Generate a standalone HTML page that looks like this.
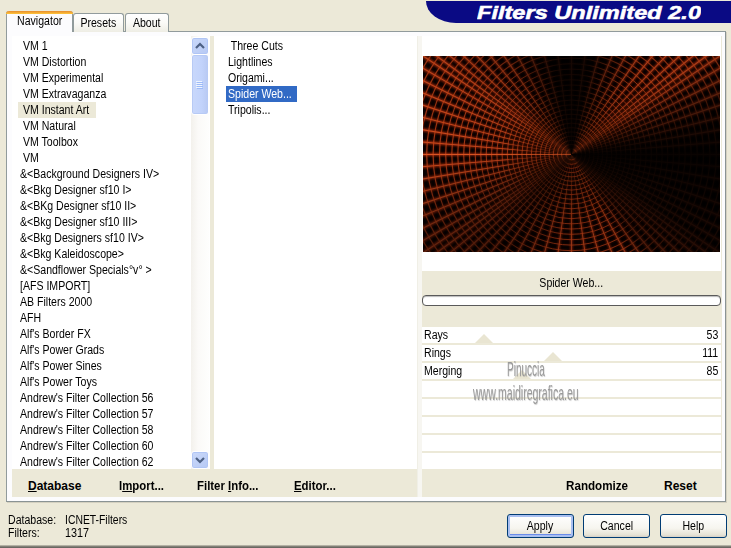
<!DOCTYPE html>
<html><head><meta charset="utf-8"><title>Filters Unlimited 2.0</title>
<style>
html,body{margin:0;padding:0}
body{width:731px;height:548px;overflow:hidden;background:#ece9d8;position:relative;font-family:"Liberation Sans",sans-serif;font-size:12px;color:#000}
div,span,i{box-sizing:border-box}
.abs{position:absolute}
.t{display:inline-block;white-space:pre;transform:scaleX(.88);transform-origin:0 50%}
.tr{transform-origin:100% 50%}
.tc{transform-origin:50% 50%}
#banner{position:absolute;left:426px;top:1px;width:305px;height:22px;background:#0a0a84;border-bottom-left-radius:30px 22px}
#title{position:absolute;left:477px;top:0;width:224px;height:24px}
#panel{position:absolute;left:6px;top:31px;width:720px;height:471px;background:#fcfcfe;border:1px solid #919b9c;border-right-color:#8a9394;border-bottom-color:#8a9394;box-shadow:1px 1px 0 #d4d0c0}
#inner{position:absolute;left:12px;top:36px;width:710px;height:461px;background:#ece9d8}
.tab{position:absolute;top:13px;height:19px;border:1px solid #919b9c;border-bottom:none;border-radius:3px 3px 0 0;background:linear-gradient(#ffffff,#fafaf7 50%,#eeede4);text-align:center;line-height:19px}
#tab1{left:6px;top:11px;width:67px;height:21px;background:#fcfcfe;border-top:none;line-height:21px;z-index:3}
#tab1:before{content:"";position:absolute;left:-1px;top:0;width:67px;height:3px;background:linear-gradient(#e68b2c,#ffc73c);border-radius:3px 3px 0 0}
.list{position:absolute;top:36px;height:433px;background:#fff}
.it{position:absolute;height:16px;line-height:17px;padding:0 0 0 2px;white-space:pre}
.it .t{transform-origin:0 50%}
.s1{background:#ece9d8}
.s2{background:#316ac5;color:#fff}
#sb{position:absolute;left:191px;top:36px;width:18px;height:433px;background:linear-gradient(90deg,#f3f1ec,#fbfaf8 40%,#fefefd)}
.sbtn{position:absolute;left:0;width:18px;height:18px;border:1px solid #fff;border-radius:3px;background:linear-gradient(135deg,#cad9fa,#b6c9f4);box-shadow:inset 0 0 0 1px #b0c5f5}
#thumb{position:absolute;left:0;top:18px;width:18px;height:61px;border:1px solid #fff;border-radius:3px;background:linear-gradient(90deg,#c9d8fb,#c2d3fb 60%,#b8c9f2);box-shadow:inset 0 0 0 1px #b7caf5}
.bt{position:absolute;top:477px;font-weight:bold;font-size:12px;line-height:18px;white-space:pre}
.bt u{text-decoration:underline}
#pv{position:absolute;left:422px;top:36px;width:299px;height:235px;background:#fff}
#img{position:absolute;left:423px;top:56px;width:297px;height:196px;overflow:hidden;background:#000}
#conic{position:absolute;left:-60px;top:-110px;width:417px;height:417px;background:conic-gradient(from 0deg at 50% 50%,rgba(0,0,0,0.88) 0deg,rgba(0,0,0,0.86) 10deg,rgba(0,0,0,0.5) 22deg,rgba(0,0,0,0.15) 38deg,rgba(0,0,0,0.15) 53deg,rgba(0,0,0,0.5) 65deg,rgba(0,0,0,0.85) 80deg,rgba(0,0,0,0.95) 90deg,rgba(0,0,0,0.85) 123deg,rgba(0,0,0,0.6) 141deg,rgba(0,0,0,0.22) 152deg,rgba(0,0,0,0.2) 185deg,rgba(0,0,0,0.5) 208deg,rgba(0,0,0,0.6) 225deg,rgba(0,0,0,0.5) 240deg,rgba(0,0,0,0.25) 255deg,rgba(0,0,0,0) 270deg,rgba(0,0,0,0.1) 304deg,rgba(0,0,0,0.35) 325deg,rgba(0,0,0,0.7) 342deg,rgba(0,0,0,0.86) 350deg,rgba(0,0,0,0.88) 360deg)}
#fname{position:absolute;left:422px;top:274px;width:299px;height:18px;text-align:center;line-height:18px}
#prog{position:absolute;left:422px;top:295px;width:299px;height:11px;border:1px solid #5a5a5a;border-radius:4px;background:#fff;box-shadow:inset 0 1px 1px #bbb}
.pr{position:absolute;left:422px;width:299px;height:16px;background:#fff;line-height:17px}
.pl{position:absolute;left:2px;top:0}
.pv{position:absolute;right:3px;top:0;text-align:right}
.tri{position:absolute;top:7px;width:0;height:0;border-left:9px solid transparent;border-right:9px solid transparent;border-bottom:9px solid #e9e5d2}
.wm{position:absolute;color:#9a9a9a;white-space:pre;transform-origin:0 0;text-shadow:1px 1px 1px rgba(120,120,120,.35)}
.btn{position:absolute;top:514px;height:24px;border:1px solid #003c74;border-radius:3px;background:linear-gradient(#fff,#f6f5ef 60%,#e6e3d6 90%,#d6d0c5);text-align:center;line-height:23px}
#apply{box-shadow:inset 0 0 0 2px #a9bff0,inset 0 -3px 0 #6b8cea, inset 0 2px 0 #cfe0fd}
.stat{position:absolute;line-height:13px;white-space:pre}
#bot{position:absolute;left:0;top:545px;width:731px;height:3px;background:linear-gradient(#cfccbc,#85837a 45%,#5f5d57)}
</style></head><body>
<div id="banner"></div>
<svg id="title" viewBox="0 0 224 24"><text x="0" y="18.6" font-family="Liberation Sans, sans-serif" font-weight="bold" font-style="italic" font-size="18" fill="#fff" stroke="#fff" stroke-width=".55" textLength="224" lengthAdjust="spacingAndGlyphs">Filters Unlimited 2.0</text></svg>
<div id="panel"></div>
<div class="tab" id="tab1"><span class="t tc">Navigator</span></div>
<div class="tab" style="left:73px;width:51px"><span class="t tc">Presets</span></div>
<div class="tab" style="left:125px;width:44px"><span class="t tc">About</span></div>
<div id="inner"></div>
<div class="list" style="left:12px;width:198px"></div>
<div class="list" style="left:214px;width:203px"></div>
<div class="abs" style="left:417px;top:36px;width:5px;height:461px;background:#f7f6f1;border-left:1px solid #f0efe6"></div>
<div class="it" style="left:18px;top:38px"><span class="t"> VM 1</span></div>
<div class="it" style="left:18px;top:54px"><span class="t"> VM Distortion</span></div>
<div class="it" style="left:18px;top:70px"><span class="t"> VM Experimental</span></div>
<div class="it" style="left:18px;top:86px"><span class="t"> VM Extravaganza</span></div>
<div class="it s1" style="left:18px;top:102px;width:78px"><span class="t"> VM Instant Art</span></div>
<div class="it" style="left:18px;top:118px"><span class="t"> VM Natural</span></div>
<div class="it" style="left:18px;top:134px"><span class="t"> VM Toolbox</span></div>
<div class="it" style="left:18px;top:150px"><span class="t"> VM</span></div>
<div class="it" style="left:18px;top:166px"><span class="t">&amp;&lt;Background Designers IV&gt;</span></div>
<div class="it" style="left:18px;top:182px"><span class="t">&amp;&lt;Bkg Designer sf10 I&gt;</span></div>
<div class="it" style="left:18px;top:198px"><span class="t">&amp;&lt;BKg Designer sf10 II&gt;</span></div>
<div class="it" style="left:18px;top:214px"><span class="t">&amp;&lt;Bkg Designer sf10 III&gt;</span></div>
<div class="it" style="left:18px;top:230px"><span class="t">&amp;&lt;Bkg Designers sf10 IV&gt;</span></div>
<div class="it" style="left:18px;top:246px"><span class="t">&amp;&lt;Bkg Kaleidoscope&gt;</span></div>
<div class="it" style="left:18px;top:262px"><span class="t">&amp;&lt;Sandflower Specials°v° &gt;</span></div>
<div class="it" style="left:18px;top:278px"><span class="t">[AFS IMPORT]</span></div>
<div class="it" style="left:18px;top:294px"><span class="t">AB Filters 2000</span></div>
<div class="it" style="left:18px;top:310px"><span class="t">AFH</span></div>
<div class="it" style="left:18px;top:326px"><span class="t">Alf&#x27;s Border FX</span></div>
<div class="it" style="left:18px;top:342px"><span class="t">Alf&#x27;s Power Grads</span></div>
<div class="it" style="left:18px;top:358px"><span class="t">Alf&#x27;s Power Sines</span></div>
<div class="it" style="left:18px;top:374px"><span class="t">Alf&#x27;s Power Toys</span></div>
<div class="it" style="left:18px;top:390px"><span class="t">Andrew&#x27;s Filter Collection 56</span></div>
<div class="it" style="left:18px;top:406px"><span class="t">Andrew&#x27;s Filter Collection 57</span></div>
<div class="it" style="left:18px;top:422px"><span class="t">Andrew&#x27;s Filter Collection 58</span></div>
<div class="it" style="left:18px;top:438px"><span class="t">Andrew&#x27;s Filter Collection 60</span></div>
<div class="it" style="left:18px;top:454px"><span class="t">Andrew&#x27;s Filter Collection 62</span></div>
<div class="it" style="left:226px;top:38px"><span class="t"> Three Cuts</span></div>
<div class="it" style="left:226px;top:54px"><span class="t">Lightlines</span></div>
<div class="it" style="left:226px;top:70px"><span class="t">Origami...</span></div>
<div class="it s2" style="left:226px;top:86px;width:71px"><span class="t">Spider Web...</span></div>
<div class="it" style="left:226px;top:102px"><span class="t">Tripolis...</span></div>
<div id="sb">
 <div class="sbtn" style="top:1px"><svg width="16" height="16" viewBox="-.5 -.5 16 16" style="position:absolute;left:0;top:0"><path d="M3.5 9.5L7.5 5.5L11.5 9.5" fill="none" stroke="#4d6185" stroke-width="2.2"/></svg></div>
 <div id="thumb"><svg width="15" height="10" viewBox="0 0 15 10" shape-rendering="crispEdges" style="position:absolute;left:0;top:26px"><path d="M4 .5h6M4 2.5h6M4 4.5h6M4 6.5h6" stroke="#eef4fe" stroke-width="1"/><path d="M5 1.5h6M5 3.5h6M5 5.5h6M5 7.5h6" stroke="#8cb0f8" stroke-width="1" opacity=".7"/></svg></div>
 <div class="sbtn" style="top:415px"><svg width="16" height="16" viewBox="-.5 -.5 16 16" style="position:absolute;left:0;top:0"><path d="M3.5 5.5L7.5 9.5L11.5 5.5" fill="none" stroke="#4d6185" stroke-width="2.2"/></svg></div>
</div>
<div class="bt" style="left:28px"><u>D</u>atabase</div>
<div class="bt" style="left:119px"><span class="t" style="transform:scaleX(.95)">I<u>m</u>port...</span></div>
<div class="bt" style="left:197px"><span class="t" style="transform:scaleX(.95)">Filter <u>I</u>nfo...</span></div>
<div class="bt" style="left:294px"><span class="t" style="transform:scaleX(.95)"><u>E</u>ditor...</span></div>
<div class="bt" style="left:566px"><span class="t" style="transform:scaleX(.97)">Randomize</span></div>
<div class="bt" style="left:664px">Reset</div>
<div id="pv"></div>
<div id="img"><svg width="297" height="196" viewBox="0 0 297 196" style="position:absolute;left:0;top:0">
<defs><radialGradient id="rb" gradientUnits="userSpaceOnUse" cx="148.5" cy="98.4" r="70"><stop offset="0" stop-color="#a62c0c" stop-opacity="0.1"/><stop offset="0.4" stop-color="#a62c0c" stop-opacity="0.5"/><stop offset="1" stop-color="#a62c0c" stop-opacity="1"/></radialGradient><radialGradient id="rc" gradientUnits="userSpaceOnUse" cx="148.5" cy="98.4" r="70"><stop offset="0" stop-color="#dc5420" stop-opacity="0.2"/><stop offset="0.35" stop-color="#dc5420" stop-opacity="0.55"/><stop offset="1" stop-color="#dc5420" stop-opacity="1"/></radialGradient><filter id="fb" x="-5%" y="-5%" width="110%" height="110%"><feGaussianBlur stdDeviation="0.9"/></filter><filter id="fc" x="-5%" y="-5%" width="110%" height="110%"><feGaussianBlur stdDeviation="0.3"/></filter><filter id="fr" x="-5%" y="-5%" width="110%" height="110%"><feGaussianBlur stdDeviation="0.35"/></filter><filter id="fg" x="-5%" y="-5%" width="110%" height="110%"><feGaussianBlur stdDeviation="0.9"/></filter></defs>
<rect width="297" height="196" fill="#040000"/>
<g opacity=".9" filter="url(#fb)"><path d="M148.6 98.3L-4.6 -5.5L-6.9 -2.0L148.4 98.5ZM148.6 98.5L303.9 -2.0L301.6 -5.5L148.4 98.3ZM148.6 98.3L-10.5 3.8L-12.6 7.4L148.4 98.5ZM148.6 98.5L309.6 7.4L307.5 3.8L148.4 98.3ZM148.6 98.3L-16.2 14.2L-18.1 17.9L148.4 98.5ZM148.6 98.5L315.1 17.9L313.2 14.2L148.4 98.3ZM148.6 98.3L-21.6 25.7L-23.2 29.5L148.4 98.5ZM148.6 98.5L320.2 29.5L318.6 25.7L148.4 98.3ZM148.5 98.3L-26.5 38.2L-27.8 42.2L148.5 98.5ZM148.5 98.5L324.8 42.2L323.5 38.2L148.5 98.3ZM148.5 98.3L-30.5 51.8L-31.5 55.8L148.5 98.5ZM148.5 98.5L328.5 55.8L327.5 51.8L148.5 98.3ZM148.5 98.3L-33.7 66.1L-34.4 70.2L148.5 98.5ZM148.5 98.5L331.4 70.2L330.7 66.1L148.5 98.3ZM148.5 98.3L-35.7 81.0L-36.0 85.2L148.5 98.5ZM148.5 98.5L333.0 85.2L332.7 81.0L148.5 98.3ZM148.5 98.2L-36.5 96.3L-36.5 100.5L148.5 98.6ZM148.5 98.6L333.5 100.5L333.5 96.3L148.5 98.2ZM148.5 98.3L-36.0 111.6L-35.7 115.8L148.5 98.5ZM148.5 98.5L332.7 115.8L333.0 111.6L148.5 98.3ZM148.5 98.3L-34.4 126.6L-33.7 130.7L148.5 98.5ZM148.5 98.5L330.7 130.7L331.4 126.6L148.5 98.3ZM148.5 98.3L-31.5 141.0L-30.5 145.0L148.5 98.5ZM148.5 98.5L327.5 145.0L328.5 141.0L148.5 98.3ZM148.5 98.3L-27.8 154.6L-26.5 158.6L148.5 98.5ZM148.5 98.5L323.5 158.6L324.8 154.6L148.5 98.3ZM148.4 98.3L-23.2 167.3L-21.6 171.1L148.6 98.5ZM148.4 98.5L318.6 171.1L320.2 167.3L148.6 98.3ZM148.4 98.3L-18.1 178.9L-16.2 182.6L148.6 98.5ZM148.4 98.5L313.2 182.6L315.1 178.9L148.6 98.3ZM148.4 98.3L-12.6 189.4L-10.5 193.0L148.6 98.5ZM148.4 98.5L307.5 193.0L309.6 189.4L148.6 98.3ZM148.4 98.3L-6.9 198.8L-4.6 202.3L148.6 98.5ZM148.4 98.5L301.6 202.3L303.9 198.8L148.6 98.3ZM148.6 98.3L0.2 -12.3L-2.2 -8.9L148.4 98.5ZM148.4 98.3L-2.2 205.7L0.2 209.1L148.6 98.5ZM148.6 98.3L6.1 -19.7L3.4 -16.4L148.4 98.5ZM148.4 98.3L3.4 213.2L6.1 216.5L148.6 98.5ZM148.6 98.3L13.2 -27.7L10.3 -24.6L148.4 98.5ZM148.4 98.3L10.3 221.4L13.2 224.5L148.6 98.5ZM148.6 98.3L21.9 -36.5L18.8 -33.6L148.4 98.5ZM148.4 98.3L18.8 230.4L21.9 233.3L148.6 98.5ZM148.6 98.3L32.5 -45.8L29.3 -43.1L148.4 98.5ZM148.4 98.3L29.3 239.9L32.5 242.6L148.6 98.5ZM148.6 98.3L45.6 -55.3L42.1 -53.0L148.4 98.5ZM148.4 98.3L42.1 249.8L45.6 252.1L148.6 98.5ZM148.6 98.3L61.3 -64.8L57.7 -62.8L148.4 98.5ZM148.4 98.3L57.7 259.6L61.3 261.6L148.6 98.5ZM148.6 98.3L80.0 -73.5L76.2 -71.9L148.4 98.5ZM148.4 98.3L76.2 268.7L80.0 270.3L148.6 98.5ZM148.6 98.4L101.6 -80.6L97.5 -79.5L148.4 98.4ZM148.4 98.4L97.5 276.3L101.6 277.4L148.6 98.4ZM148.6 98.4L125.4 -85.2L121.3 -84.6L148.4 98.4ZM148.4 98.4L121.3 281.4L125.4 282.0L148.6 98.4ZM148.7 98.4L150.6 -86.6L146.4 -86.6L148.3 98.4ZM148.3 98.4L146.4 283.4L150.6 283.4L148.7 98.4ZM148.6 98.4L175.7 -84.6L171.6 -85.2L148.4 98.4ZM148.4 98.4L171.6 282.0L175.7 281.4L148.6 98.4ZM148.6 98.4L199.5 -79.5L195.4 -80.6L148.4 98.4ZM148.4 98.4L195.4 277.4L199.5 276.3L148.6 98.4ZM148.6 98.5L220.8 -71.9L217.0 -73.5L148.4 98.3ZM148.4 98.5L217.0 270.3L220.8 268.7L148.6 98.3ZM148.6 98.5L239.3 -62.8L235.7 -64.8L148.4 98.3ZM148.4 98.5L235.7 261.6L239.3 259.6L148.6 98.3ZM148.6 98.5L254.9 -53.0L251.4 -55.3L148.4 98.3ZM148.4 98.5L251.4 252.1L254.9 249.8L148.6 98.3ZM148.6 98.5L267.7 -43.1L264.5 -45.8L148.4 98.3ZM148.4 98.5L264.5 242.6L267.7 239.9L148.6 98.3ZM148.6 98.5L278.2 -33.6L275.1 -36.5L148.4 98.3ZM148.4 98.5L275.1 233.3L278.2 230.4L148.6 98.3ZM148.6 98.5L286.7 -24.6L283.8 -27.7L148.4 98.3ZM148.4 98.5L283.8 224.5L286.7 221.4L148.6 98.3ZM148.6 98.5L293.6 -16.4L290.9 -19.7L148.4 98.3ZM148.4 98.5L290.9 216.5L293.6 213.2L148.6 98.3ZM148.6 98.5L299.2 -8.9L296.8 -12.3L148.4 98.3ZM148.4 98.5L296.8 209.1L299.2 205.7L148.6 98.3Z" fill="url(#rb)"/></g>
<g opacity=".3" filter="url(#fg)" fill="none" stroke="#921e02"><circle cx="148.5" cy="98.4" r="5.5" stroke-width="0.96"/><circle cx="148.5" cy="98.4" r="10.0" stroke-width="1.01"/><circle cx="148.5" cy="98.4" r="14.1" stroke-width="1.05"/><circle cx="148.5" cy="98.4" r="18.2" stroke-width="1.10"/><circle cx="148.5" cy="98.4" r="22.5" stroke-width="1.15"/><circle cx="148.5" cy="98.4" r="26.8" stroke-width="1.19"/><circle cx="148.5" cy="98.4" r="31.2" stroke-width="1.24"/><circle cx="148.5" cy="98.4" r="35.7" stroke-width="1.29"/><circle cx="148.5" cy="98.4" r="40.2" stroke-width="1.34"/><circle cx="148.5" cy="98.4" r="44.9" stroke-width="1.39"/><circle cx="148.5" cy="98.4" r="49.6" stroke-width="1.45"/><circle cx="148.5" cy="98.4" r="54.4" stroke-width="1.50"/><circle cx="148.5" cy="98.4" r="59.3" stroke-width="1.55"/><circle cx="148.5" cy="98.4" r="64.3" stroke-width="1.61"/><circle cx="148.5" cy="98.4" r="69.4" stroke-width="1.66"/><circle cx="148.5" cy="98.4" r="74.6" stroke-width="1.72"/><circle cx="148.5" cy="98.4" r="79.9" stroke-width="1.78"/><circle cx="148.5" cy="98.4" r="85.3" stroke-width="1.84"/><circle cx="148.5" cy="98.4" r="90.7" stroke-width="1.90"/><circle cx="148.5" cy="98.4" r="96.3" stroke-width="1.96"/><circle cx="148.5" cy="98.4" r="102.0" stroke-width="2.02"/><circle cx="148.5" cy="98.4" r="107.8" stroke-width="2.09"/><circle cx="148.5" cy="98.4" r="113.7" stroke-width="2.15"/><circle cx="148.5" cy="98.4" r="119.7" stroke-width="2.22"/><circle cx="148.5" cy="98.4" r="125.8" stroke-width="2.28"/><circle cx="148.5" cy="98.4" r="132.0" stroke-width="2.35"/><circle cx="148.5" cy="98.4" r="138.4" stroke-width="2.42"/><circle cx="148.5" cy="98.4" r="144.8" stroke-width="2.49"/><circle cx="148.5" cy="98.4" r="151.4" stroke-width="2.57"/><circle cx="148.5" cy="98.4" r="158.1" stroke-width="2.64"/><circle cx="148.5" cy="98.4" r="164.9" stroke-width="2.71"/><circle cx="148.5" cy="98.4" r="171.9" stroke-width="2.79"/><circle cx="148.5" cy="98.4" r="179.0" stroke-width="2.87"/></g>
<g opacity=".85" filter="url(#fc)"><path d="M148.6 98.2L-5.4 -4.3L-6.1 -3.3L148.4 98.6ZM148.6 98.6L303.1 -3.3L302.4 -4.3L148.4 98.2ZM148.6 98.2L-11.2 5.1L-11.8 6.1L148.4 98.6ZM148.6 98.6L308.8 6.1L308.2 5.1L148.4 98.2ZM148.6 98.2L-16.9 15.5L-17.4 16.6L148.4 98.6ZM148.6 98.6L314.4 16.6L313.9 15.5L148.4 98.2ZM148.6 98.2L-22.2 27.1L-22.7 28.2L148.4 98.6ZM148.6 98.6L319.7 28.2L319.2 27.1L148.4 98.2ZM148.6 98.2L-26.9 39.6L-27.3 40.8L148.4 98.6ZM148.6 98.6L324.3 40.8L323.9 39.6L148.4 98.2ZM148.5 98.2L-30.9 53.2L-31.2 54.4L148.5 98.6ZM148.5 98.6L328.2 54.4L327.9 53.2L148.5 98.2ZM148.5 98.2L-33.9 67.6L-34.1 68.8L148.5 98.6ZM148.5 98.6L331.1 68.8L330.9 67.6L148.5 98.2ZM148.5 98.2L-35.8 82.5L-35.9 83.7L148.5 98.6ZM148.5 98.6L332.9 83.7L332.8 82.5L148.5 98.2ZM148.5 98.2L-36.5 97.8L-36.5 99.0L148.5 98.6ZM148.5 98.6L333.5 99.0L333.5 97.8L148.5 98.2ZM148.5 98.2L-35.9 113.1L-35.8 114.3L148.5 98.6ZM148.5 98.6L332.8 114.3L332.9 113.1L148.5 98.2ZM148.5 98.2L-34.1 128.0L-33.9 129.2L148.5 98.6ZM148.5 98.6L330.9 129.2L331.1 128.0L148.5 98.2ZM148.5 98.2L-31.2 142.4L-30.9 143.6L148.5 98.6ZM148.5 98.6L327.9 143.6L328.2 142.4L148.5 98.2ZM148.4 98.2L-27.3 156.0L-26.9 157.2L148.6 98.6ZM148.4 98.6L323.9 157.2L324.3 156.0L148.6 98.2ZM148.4 98.2L-22.7 168.6L-22.2 169.7L148.6 98.6ZM148.4 98.6L319.2 169.7L319.7 168.6L148.6 98.2ZM148.4 98.2L-17.4 180.2L-16.9 181.3L148.6 98.6ZM148.4 98.6L313.9 181.3L314.4 180.2L148.6 98.2ZM148.4 98.2L-11.8 190.7L-11.2 191.7L148.6 98.6ZM148.4 98.6L308.2 191.7L308.8 190.7L148.6 98.2ZM148.4 98.2L-6.1 200.1L-5.4 201.1L148.6 98.6ZM148.4 98.6L302.4 201.1L303.1 200.1L148.6 98.2ZM148.6 98.2L-0.6 -11.1L-1.4 -10.1L148.4 98.6ZM148.4 98.2L-1.4 206.9L-0.6 207.9L148.6 98.6ZM148.6 98.2L5.1 -18.5L4.4 -17.6L148.4 98.6ZM148.4 98.2L4.4 214.4L5.1 215.3L148.6 98.6ZM148.6 98.3L12.2 -26.6L11.3 -25.7L148.4 98.5ZM148.4 98.3L11.3 222.5L12.2 223.4L148.6 98.5ZM148.6 98.3L20.8 -35.5L19.9 -34.6L148.4 98.5ZM148.4 98.3L19.9 231.4L20.8 232.3L148.6 98.5ZM148.7 98.3L31.4 -44.8L30.5 -44.0L148.3 98.5ZM148.3 98.3L30.5 240.8L31.4 241.6L148.7 98.5ZM148.7 98.3L44.4 -54.5L43.3 -53.8L148.3 98.5ZM148.3 98.3L43.3 250.6L44.4 251.3L148.7 98.5ZM148.7 98.3L60.0 -64.1L59.0 -63.5L148.3 98.5ZM148.3 98.3L59.0 260.3L60.0 260.9L148.7 98.5ZM148.7 98.3L78.6 -72.9L77.5 -72.4L148.3 98.5ZM148.3 98.3L77.5 269.2L78.6 269.7L148.7 98.5ZM148.7 98.3L100.1 -80.2L99.0 -79.8L148.3 98.5ZM148.3 98.3L99.0 276.6L100.1 277.0L148.7 98.5ZM148.7 98.4L124.0 -85.0L122.8 -84.8L148.3 98.4ZM148.3 98.4L122.8 281.6L124.0 281.8L148.7 98.4ZM148.7 98.4L149.1 -86.6L147.9 -86.6L148.3 98.4ZM148.3 98.4L147.9 283.4L149.1 283.4L148.7 98.4ZM148.7 98.4L174.2 -84.8L173.0 -85.0L148.3 98.4ZM148.3 98.4L173.0 281.8L174.2 281.6L148.7 98.4ZM148.7 98.5L198.0 -79.8L196.9 -80.2L148.3 98.3ZM148.3 98.5L196.9 277.0L198.0 276.6L148.7 98.3ZM148.7 98.5L219.5 -72.4L218.4 -72.9L148.3 98.3ZM148.3 98.5L218.4 269.7L219.5 269.2L148.7 98.3ZM148.7 98.5L238.0 -63.5L237.0 -64.1L148.3 98.3ZM148.3 98.5L237.0 260.9L238.0 260.3L148.7 98.3ZM148.7 98.5L253.7 -53.8L252.6 -54.5L148.3 98.3ZM148.3 98.5L252.6 251.3L253.7 250.6L148.7 98.3ZM148.7 98.5L266.5 -44.0L265.6 -44.8L148.3 98.3ZM148.3 98.5L265.6 241.6L266.5 240.8L148.7 98.3ZM148.6 98.5L277.1 -34.6L276.2 -35.5L148.4 98.3ZM148.4 98.5L276.2 232.3L277.1 231.4L148.6 98.3ZM148.6 98.5L285.7 -25.7L284.8 -26.6L148.4 98.3ZM148.4 98.5L284.8 223.4L285.7 222.5L148.6 98.3ZM148.6 98.6L292.6 -17.6L291.9 -18.5L148.4 98.2ZM148.4 98.6L291.9 215.3L292.6 214.4L148.6 98.2ZM148.6 98.6L298.4 -10.1L297.6 -11.1L148.4 98.2ZM148.4 98.6L297.6 207.9L298.4 206.9L148.6 98.2Z" fill="url(#rc)"/></g>
<g opacity=".75" filter="url(#fr)" fill="none" stroke="#cc461a"><circle cx="148.5" cy="98.4" r="5.5" stroke-width="0.67"/><circle cx="148.5" cy="98.4" r="10.0" stroke-width="0.69"/><circle cx="148.5" cy="98.4" r="14.1" stroke-width="0.70"/><circle cx="148.5" cy="98.4" r="18.2" stroke-width="0.71"/><circle cx="148.5" cy="98.4" r="22.5" stroke-width="0.73"/><circle cx="148.5" cy="98.4" r="26.8" stroke-width="0.74"/><circle cx="148.5" cy="98.4" r="31.2" stroke-width="0.76"/><circle cx="148.5" cy="98.4" r="35.7" stroke-width="0.77"/><circle cx="148.5" cy="98.4" r="40.2" stroke-width="0.79"/><circle cx="148.5" cy="98.4" r="44.9" stroke-width="0.81"/><circle cx="148.5" cy="98.4" r="49.6" stroke-width="0.82"/><circle cx="148.5" cy="98.4" r="54.4" stroke-width="0.84"/><circle cx="148.5" cy="98.4" r="59.3" stroke-width="0.86"/><circle cx="148.5" cy="98.4" r="64.3" stroke-width="0.88"/><circle cx="148.5" cy="98.4" r="69.4" stroke-width="0.89"/><circle cx="148.5" cy="98.4" r="74.6" stroke-width="0.91"/><circle cx="148.5" cy="98.4" r="79.9" stroke-width="0.93"/><circle cx="148.5" cy="98.4" r="85.3" stroke-width="0.95"/><circle cx="148.5" cy="98.4" r="90.7" stroke-width="0.97"/><circle cx="148.5" cy="98.4" r="96.3" stroke-width="0.99"/><circle cx="148.5" cy="98.4" r="102.0" stroke-width="1.01"/><circle cx="148.5" cy="98.4" r="107.8" stroke-width="1.03"/><circle cx="148.5" cy="98.4" r="113.7" stroke-width="1.05"/><circle cx="148.5" cy="98.4" r="119.7" stroke-width="1.07"/><circle cx="148.5" cy="98.4" r="125.8" stroke-width="1.09"/><circle cx="148.5" cy="98.4" r="132.0" stroke-width="1.11"/><circle cx="148.5" cy="98.4" r="138.4" stroke-width="1.13"/><circle cx="148.5" cy="98.4" r="144.8" stroke-width="1.16"/><circle cx="148.5" cy="98.4" r="151.4" stroke-width="1.18"/><circle cx="148.5" cy="98.4" r="158.1" stroke-width="1.20"/><circle cx="148.5" cy="98.4" r="164.9" stroke-width="1.23"/><circle cx="148.5" cy="98.4" r="171.9" stroke-width="1.25"/><circle cx="148.5" cy="98.4" r="179.0" stroke-width="1.28"/></g>
<path d="M0 98.4H148.5" stroke="#e8602a" stroke-width="1" opacity=".6"/>
</svg><div id="conic"></div></div>
<div id="fname"><span class="t tc">Spider Web...</span></div>
<div id="prog"></div>
<div class="pr" style="top:327px"><span class="t pl">Rays</span><span class="pv"><span class="t tr">53</span></span><i class="tri" style="left:53.3px"></i></div>
<div class="pr" style="top:345px"><span class="t pl">Rings</span><span class="pv"><span class="t tr">111</span></span><i class="tri" style="left:121.5px"></i></div>
<div class="pr" style="top:363px"><span class="t pl">Merging</span><span class="pv"><span class="t tr">85</span></span><i class="tri" style="left:91.0px"></i></div>
<div class="pr" style="top:381px"></div>
<div class="pr" style="top:399px"></div>
<div class="pr" style="top:417px"></div>
<div class="pr" style="top:435px"></div>
<div class="pr" style="top:453px"></div>
<div class="wm" id="wm1" style="left:507px;top:358px;font-size:21px;line-height:22px;transform:scaleX(.476)">Pinuccia</div>
<div class="wm" id="wm2" style="left:473px;top:382px;font-size:21px;line-height:22px;transform:scaleX(.5)">www.maidiregrafica.eu</div>
<div class="btn" id="apply" style="left:507px;width:67px"><span class="t tc">Apply</span></div>
<div class="btn" style="left:583px;width:67px"><span class="t tc">Cancel</span></div>
<div class="btn" style="left:660px;width:67px"><span class="t tc">Help</span></div>
<div class="stat" style="left:8px;top:514px"><span class="t">Database:</span></div>
<div class="stat" style="left:65px;top:514px"><span class="t" style="transform:scaleX(.865)">ICNET-Filters</span></div>
<div class="stat" style="left:8px;top:527px"><span class="t">Filters:</span></div>
<div class="stat" style="left:65px;top:527px"><span class="t" style="transform:scaleX(.9)">1317</span></div>
<div id="bot"></div>
</body></html>
